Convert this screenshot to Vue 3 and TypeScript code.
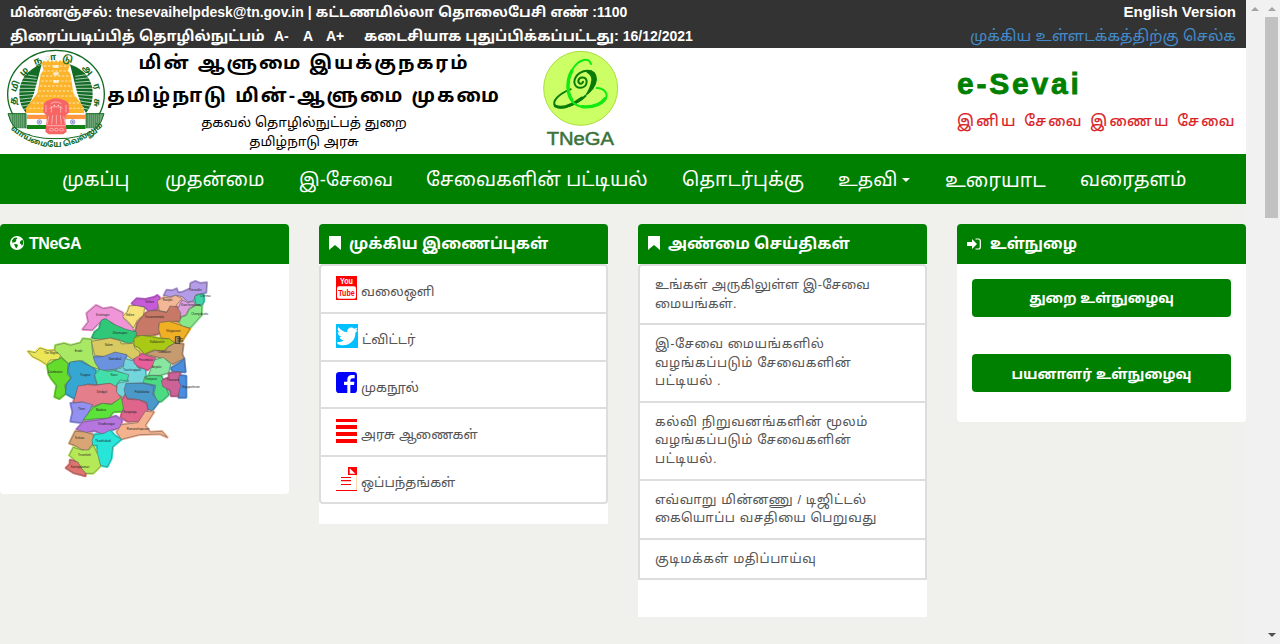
<script setup lang="ts">
interface Region { fill: string; points: string }
interface Label { x: number; y: number; text: string }

const menu = [
  { label: 'முகப்பு', id: 'home' },
  { label: 'முதன்மை', id: 'main' },
  { label: 'இ-சேவை', id: 'sevai' },
  { label: 'சேவைகளின் பட்டியல்', id: 'services' },
  { label: 'தொடர்புக்கு', id: 'contact' },
  { label: 'உதவி', id: 'help', caret: true },
  { label: 'உரையாட', id: 'chat' },
  { label: 'வரைதளம்', id: 'map' },
]

const links = [
  { icon: 'youtube', label: 'வலைஒளி' },
  { icon: 'twitter', label: 'ட்விட்டர்' },
  { icon: 'facebook', label: 'முகநூல்' },
  { icon: 'orders', label: 'அரசு ஆணைகள்' },
  { icon: 'document', label: 'ஒப்பந்தங்கள்' },
]

const news: string[][] = [
  ['உங்கள் அருகிலுள்ள இ-சேவை', 'மையங்கள்.'],
  ['இ-சேவை மையங்களில்', 'வழங்கப்படும் சேவைகளின்', 'பட்டியல் .'],
  ['கல்வி நிறுவனங்களின் மூலம்', 'வழங்கப்படும் சேவைகளின்', 'பட்டியல்.'],
  ['எவ்வாறு மின்னணு / டிஜிட்டல்', 'கையொப்ப வசதியை பெறுவது'],
  ['குடிமக்கள் மதிப்பாய்வு'],
]

const seal = [
  { ch: 'த', x: 40, y: 167, r: -82 },
  { ch: 'மி', x: 46, y: 124, r: -66 },
  { ch: 'ழ', x: 72, y: 80, r: -45 },
  { ch: 'ந', x: 113, y: 48, r: -22 },
  { ch: 'ா', x: 152, y: 38, r: -4 },
  { ch: 'டு', x: 203, y: 42, r: 16 },
  { ch: 'அ', x: 263, y: 75, r: 48 },
  { ch: 'ர', x: 290, y: 125, r: 72 },
  { ch: 'சு', x: 290, y: 173, r: 92 },
]

const regions: Region[] = [
  { fill: '#f096d8', points: '188,178 205,156 200,130 228,106 250,116 275,112 308,128 312,146 336,170 344,186 326,184 300,176 276,158 252,146 236,160 216,180' },
  { fill: '#f7e27c', points: '308,140 322,126 328,108 350,106 374,112 370,136 352,150 340,174 326,156' },
  { fill: '#c65ad8', points: '336,100 350,86 376,88 402,82 412,76 420,84 416,100 414,116 388,124 374,110 344,106' },
  { fill: '#b59ce8', points: '432,76 440,60 456,62 470,56 474,68 488,66 510,56 512,40 526,34 540,40 560,38 558,68 528,74 520,92 504,96 488,80 468,76 450,80' },
  { fill: '#f3b795', points: '412,92 432,82 450,84 466,76 486,86 470,104 466,110 446,118 440,126 418,122' },
  { fill: '#dea0dc', points: '486,90 504,98 522,94 526,108 508,114 496,136 480,140 470,122 478,108' },
  { fill: '#40d4a8', points: '524,78 550,70 552,92 546,106 528,104' },
  { fill: '#88e888', points: '508,118 528,106 546,108 544,136 528,154 510,174 486,168 474,154 488,140 500,136' },
  { fill: '#c87866', points: '374,132 390,122 416,122 440,128 450,108 470,110 482,128 480,154 446,154 416,162 420,190 394,196 366,198 344,196 352,160' },
  { fill: '#2fc878', points: '216,204 224,186 238,176 244,150 258,146 280,162 318,178 350,186 346,214 326,220 300,210 274,204 240,208' },
  { fill: '#efb024', points: '418,158 446,154 488,168 510,176 492,204 486,214 472,202 464,218 444,206 424,204 416,178' },
  { fill: '#a9c914', points: '342,204 364,196 392,200 420,206 448,206 464,220 444,230 432,242 400,240 374,252 356,232 342,228' },
  { fill: '#d8c960', points: '214,214 250,208 270,204 300,212 304,222 340,220 344,234 360,246 358,264 338,268 318,254 284,248 256,260 224,256' },
  { fill: '#a8e864', points: '106,226 132,220 152,226 182,218 188,206 214,208 218,254 228,276 238,298 214,290 188,272 164,274 144,280 122,258 104,244' },
  { fill: '#ebe656', points: '24,244 46,248 60,234 84,242 102,240 122,256 116,268 90,270 80,284 62,272 38,260' },
  { fill: '#65dc2b', points: '82,286 104,272 124,264 144,280 142,314 152,324 134,346 138,370 118,386 104,380 110,346 94,326 86,312' },
  { fill: '#36a6d3', points: '150,276 180,272 188,278 214,290 228,302 224,324 232,344 202,342 174,354 164,386 136,370 140,342 154,324 144,302' },
  { fill: '#6b92df', points: '220,262 248,260 286,246 320,254 312,286 284,298 242,302 226,280' },
  { fill: '#72d5dc', points: '314,266 344,274 352,292 376,298 380,338 328,340 310,382 288,370 292,340 326,334 316,314 284,300 310,292' },
  { fill: '#e85e9b', points: '342,266 366,252 406,264 404,286 382,300 356,290 342,280' },
  { fill: '#c79b70', points: '376,252 404,242 434,244 446,230 464,220 490,222 486,252 492,266 458,282 436,268 408,260' },
  { fill: '#88e6a0', points: '404,270 430,262 452,282 446,308 420,316 386,316 394,294' },
  { fill: '#43dfaa', points: '224,314 240,298 264,304 284,302 326,314 322,332 300,330 286,350 270,340 232,344' },
  { fill: '#4bdc83', points: '374,320 398,316 424,318 436,348 446,374 424,394 410,394 402,370 408,346 370,338' },
  { fill: '#4a8ee2', points: '454,294 478,280 492,266 496,306 458,304' },
  { fill: '#4a8ee2', points: '476,316 498,318 498,382 476,382' },
  { fill: '#cb6298', points: '446,310 482,306 474,328 482,346 474,378 454,378 450,360 428,350 424,332 448,322' },
  { fill: '#e37e8a', points: '174,348 202,344 226,346 270,340 290,350 290,366 304,384 274,402 246,400 218,410 186,396 160,398' },
  { fill: '#4a99ca', points: '318,340 370,340 402,348 398,372 416,396 396,422 384,418 380,396 354,388 320,384 312,360' },
  { fill: '#9290f0', points: '152,400 188,396 218,404 202,434 184,458 152,454 158,426' },
  { fill: '#5be33a', points: '222,412 248,400 274,404 302,384 314,402 308,424 280,426 266,444 228,446 190,450 208,426' },
  { fill: '#df658c', points: '306,390 318,376 322,388 358,390 380,402 384,422 360,454 326,456 302,442 310,416' },
  { fill: '#b776df', points: '190,456 236,450 268,444 288,438 306,452 300,474 274,480 254,496 224,482 196,488 170,478' },
  { fill: '#f5b28f', points: '304,464 354,458 376,424 402,426 376,466 390,486 426,484 442,502 420,492 358,494 304,508 290,486' },
  { fill: '#daa574', points: '166,484 194,486 220,494 218,522 202,542 184,538 164,526 148,520' },
  { fill: '#27e5d8', points: '216,510 224,494 252,490 270,480 284,496 304,508 278,530 274,566 262,590 240,586 230,556 232,526 218,526' },
  { fill: '#b5e957', points: '160,532 184,540 206,540 220,526 234,556 242,588 220,610 190,610 184,594 164,570 148,556' },
  { fill: '#df746f', points: '138,594 150,582 150,570 174,576 184,594 196,608 196,618 160,608' },
]

const districts: Label[] = [
  { x: 228, y: 138, text: 'Krishnagiri' }, { x: 317, y: 139, text: 'Vellore' },
  { x: 376, y: 100, text: 'Vellore' }, { x: 428, y: 94, text: 'Ranipet' },
  { x: 506, y: 63, text: 'Thiruvallur' }, { x: 540, y: 82, text: 'Chennai' },
  { x: 484, y: 108, text: 'Kancheepuram' }, { x: 514, y: 135, text: 'Chengalpattu' },
  { x: 374, y: 144, text: 'Tiruvannamalai' }, { x: 278, y: 193, text: 'Dharmapuri' },
  { x: 438, y: 186, text: 'Viluppuram' }, { x: 390, y: 218, text: 'Kallakurichi' },
  { x: 254, y: 228, text: 'Salem' }, { x: 164, y: 246, text: 'Erode' },
  { x: 72, y: 253, text: 'The Nilgiris' }, { x: 266, y: 269, text: 'Namakkal' },
  { x: 414, y: 248, text: 'Cuddalore' }, { x: 356, y: 274, text: 'Perambalur' },
  { x: 84, y: 310, text: 'Coimbatore' }, { x: 180, y: 319, text: 'Tiruppur' },
  { x: 272, y: 319, text: 'Karur' }, { x: 310, y: 304, text: 'Tiruchirappalli' },
  { x: 396, y: 295, text: 'Ariyalur' }, { x: 374, y: 331, text: 'Thanjavur' },
  { x: 440, y: 334, text: 'Thiruvarur' }, { x: 486, y: 355, text: 'Nagapattinam' },
  { x: 230, y: 369, text: 'Dindigul' }, { x: 344, y: 370, text: 'Pudukkottai' },
  { x: 174, y: 420, text: 'Theni' }, { x: 228, y: 424, text: 'Madurai' },
  { x: 310, y: 429, text: 'Sivaganga' }, { x: 234, y: 465, text: 'Virudhunagar' },
  { x: 320, y: 479, text: 'Ramanathapuram' }, { x: 164, y: 507, text: 'Tenkasi' },
  { x: 226, y: 515, text: 'Thoothukudi' }, { x: 174, y: 557, text: 'Tirunelveli' },
  { x: 152, y: 595, text: 'Kanniyakumari' },
]
</script>

<template>
  <div class="window">
    <div class="page">
      <div class="topbar">
        <div class="row">
          <span class="t-mail"><span class="tight">மின்னஞ்சல்:</span> tnesevaihelpdesk@tn.gov.in | <span class="loose">கட்டணமில்லா தொலைபேசி எண்</span> :1100</span>
          <a class="version">English Version</a>
        </div>
        <div class="row">
          <div class="tools">
            <span class="t-reader">திரைப்படிப்பித் தொழில்நுட்பம்</span>
            <a class="sz sz1">A-</a><a class="sz sz2">A</a><a class="sz sz3">A+</a>
            <span class="t-updated"><span>கடைசியாக புதுப்பிக்கப்பட்டது:</span> 16/12/2021</span>
          </div>
          <a class="skip">முக்கிய உள்ளடக்கத்திற்கு செல்க</a>
        </div>
      </div>

      <header class="brand">
        <svg class="emblem" viewBox="0 9 330 318">
          <defs>
            <path id="arcBottom" d="M26 248 Q165 368 310 242" />
          </defs>
          <ellipse cx="168" cy="148" rx="145" ry="132" fill="#fff" stroke="#126b25" stroke-width="4" />
          <path d="M125 58Q56 84 58 150Q58 180 78 204L88 180L102 145Z" fill="#126b25" />
          <path d="M210 58Q280 84 278 150Q278 180 258 204L244 180L232 145Z" fill="#126b25" />
          <g stroke="#fff" stroke-width="2">
            <path v-for="n in 11" :key="n" :d="`M56 ${75 + n * 11}L110 ${85 + n * 9}M280 ${75 + n * 11}L226 ${85 + n * 9}`" />
          </g>
          <path d="M126 54L132 46L138 52L144 45L150 52L156 45L162 52L168 45L174 52L180 45L186 52L192 45L198 52L206 46L210 60L204 76L212 88L220 145L252 188V204H78V188L112 145L122 88L130 76Z" fill="#fcb52b" />
          <g stroke="#fff" stroke-width="2.4" stroke-dasharray="7 5" fill="none" opacity=".85">
            <path d="M132 63H206M130 78H208M126 93H212M124 108H214M120 123H216M116 138H220M112 153H228M98 174H240M88 190H250" />
          </g>
          <path d="M160 60h16v9h-16zM160 82h16v9h-16zM160 105h16v9h-16z" fill="#fff" opacity=".75" />
          <path d="M24 206H78V250H46Q30 232 24 206M258 206H312Q306 232 290 250H258Z" fill="#75a97d" stroke="#126b25" stroke-width="3" />
          <g stroke="#126b25" stroke-width="1.5"><path v-for="n in 7" :key="n" :d="`M${32 + n * 6} 206V248M${256 + n * 6} 206V248`" /></g>
          <path d="M46 250Q94 283 168 281Q242 283 290 250" fill="#fff" stroke="#126b25" stroke-width="3" />
          <path d="M81 209H256V223H81Z" fill="#ff9640" /><path d="M81 223H256V240H81Z" fill="#fff" /><path d="M81 240H256V252H81Z" fill="#138313" />
          <g fill="#c7cbed" stroke="#5960b0" stroke-width="1.5"><circle cx="118" cy="231" r="7" /><circle cx="218" cy="231" r="7" /></g>
          <g fill="#5960b0"><circle cx="118" cy="231" r="2" /><circle cx="218" cy="231" r="2" /></g>
          <path d="M146 166Q168 154 192 166Q208 170 206 184L208 202L196 212V228L200 260L190 268H146L136 260L140 228V212L130 202L131 182Q132 170 146 166Z" fill="#f66464" />
          <path d="M152 176Q168 166 184 176M148 190Q168 180 188 190M154 182V203M182 182V203M138 180V202M198 180V202M146 214L142 238M158 210L155 238M169 210V238M181 210L184 238M191 214L196 238M140 242H198M148 254a6 4 0 1 0 12 0a6 4 0 1 0-12 0M163 254a6 4 0 1 0 12 0a6 4 0 1 0-12 0M179 254a6 4 0 1 0 12 0a6 4 0 1 0-12 0" fill="none" stroke="#ffd0d0" stroke-width="2" />
          <g fill="#fff"><circle cx="163" cy="181" r="2" /><circle cx="175" cy="181" r="2" /></g>
          <text v-for="s in seal" :key="s.ch" class="seal-text" :transform="`translate(${s.x} ${s.y}) rotate(${s.r})`" y="8">{{ s.ch }}</text>
          <text class="seal-motto"><textPath href="#arcBottom" startOffset="8">வாய்மையே வெல்லும்</textPath></text>
        </svg>
        <div class="titles">
          <h1 class="h-a">மின் ஆளுமை இயக்குநகரம்</h1>
          <h1 class="h-b">தமிழ்நாடு மின்-ஆளுமை முகமை</h1>
          <p class="h-c">தகவல் தொழில்நுட்பத் துறை</p>
          <p class="h-d">தமிழ்நாடு அரசு</p>
        </div>
        <svg class="logo" viewBox="660 144 240 318">
          <circle cx="782" cy="265" r="111" fill="#ccff66" stroke="#acdd3e" stroke-width="3" />
          <g fill="none" stroke-linecap="round">
            <path d="M752 268C716 280 694 306 706 318C722 332 772 312 796 288" stroke="#087b08" stroke-width="6" />
            <path d="M706 318Q734 332 786 294" stroke="#087b08" stroke-width="9" />
            <path d="M813 192C808 170 778 178 760 204C738 238 738 288 760 308C785 330 836 322 856 298C868 280 850 264 830 264" stroke="#10ea10" stroke-width="6" />
            <path d="M756 212C740 240 740 280 756 300M786 320Q834 324 855 296" stroke="#10ea10" stroke-width="10" />
            <path d="M814 214C790 206 764 224 763 246C764 270 799 268 800 246C800 229 778 229 775 242C774 253 788 254 789 245" stroke="#087b08" stroke-width="6" />
          </g>
          <path d="M800 210Q830 208 831 238Q829 268 792 292Q812 262 814 240Q814 224 800 218Z" fill="#087b08" />
          <text x="680" y="436" textLength="202" lengthAdjust="spacingAndGlyphs" class="logo-text">TNeGA</text>
        </svg>
        <div class="sevai"><strong>e-Sevai</strong><span>இனிய சேவை இணைய சேவை</span></div>
      </header>

      <nav class="nav">
        <a v-for="m in menu" :key="m.id" :class="'n-' + m.id"><span>{{ m.label }}</span><i v-if="m.caret" class="caret"></i></a>
      </nav>

      <main class="grid">
        <section class="panel">
          <h2 class="latin"><svg class="i-globe" viewBox="0 0 16 16"><circle cx="8" cy="8" r="7" fill="#fff" /><path d="M3 5.5L5 3L7.4 2.4L8.6 3.5L6.8 4.8L7.4 6L5.8 7.3L4.5 7.2L3.6 8.4ZM5 9L8.2 9.2L9 10.6L7.4 13.4L6.4 12.2ZM11.4 6L13.6 4.8L14.4 8L13 11L12.1 9.2L10.8 8.2Z" fill="green" /></svg><span>TNeGA</span></h2>
          <div class="map-body">
            <svg class="map" viewBox="0 0 600 630">
              <g stroke-width="8" stroke-linejoin="round">
                <polygon v-for="(r, i) in regions" :key="i" :points="r.points" :fill="r.fill" :stroke="r.fill" />
              </g>
              <g stroke="#555" stroke-width="1.5" stroke-linejoin="round">
                <polygon v-for="(r, i) in regions" :key="i" :points="r.points" :fill="r.fill" />
              </g>
              <path d="M466 200H480V220H466ZM472 206H488M472 213H490M478 200V218" fill="#ac9156" stroke="#333" stroke-width="2.5" />
              <text v-for="(d, i) in districts" :key="i" :x="d.x" :y="d.y">{{ d.text }}</text>
            </svg>
          </div>
        </section>

        <section class="panel">
          <h2><svg class="i-mark" viewBox="0 0 12 14"><path d="M0 0H12V14L6 9L0 14Z" fill="#fff" /></svg><span class="p-links">முக்கிய இணைப்புகள்</span></h2>
          <ul class="list links">
            <li v-for="l in links" :key="l.icon">
              <svg v-if="l.icon === 'youtube'" viewBox="0 0 63 72"><path d="M0 0H63V72H0Z" fill="red" /><rect x="3" y="31" width="57" height="37" rx="6" fill="#fff" /><text x="12" y="24" textLength="39" lengthAdjust="spacingAndGlyphs" class="yt">You</text><text x="7" y="59" textLength="49" lengthAdjust="spacingAndGlyphs" class="yt red">Tube</text></svg>
              <svg v-else-if="l.icon === 'twitter'" class="wide" viewBox="0 0 66 72"><path d="M0 0H66V72H0Z" fill="#00bfff" /><path d="M4 50C13 51 19 49 23 45C16 44 12 40 11 35H17C9 32 5 26 5 20L11 22C4 16 4 9 7 5C15 15 23 20 34 21C32 8 46 2 55 10L64 7C63 11 61 14 58 16L65 14C64 18 61 20 58 22C60 51 27 69 4 55Z" transform="translate(0 4)" fill="#fff" /></svg>
              <svg v-else-if="l.icon === 'facebook'" viewBox="0 0 63 72"><rect width="63" height="63" rx="10" fill="#00f" /><path d="M34 63V39H24V29H34V23Q34 9 48 9H56V19H50Q43 19 43 25V29H55L54 39H43V63Z" fill="#fff" /></svg>
              <svg v-else-if="l.icon === 'orders'" viewBox="0 0 63 72"><path d="M0 0H63V9H0ZM0 18H63V30H0ZM0 39H63V51H0ZM0 60H63V72H0Z" fill="red" /></svg>
              <svg v-else viewBox="0 0 63 72"><path d="M36 0H63V24H36ZM15 30H45V33H15ZM15 39H45V43H15ZM15 51H45V54H15ZM0 69H63V72H0Z" fill="red" /><path d="M41 4V20H58Z" fill="#fff" /><path d="M61 24H63V69H61Z" fill="#ffc080" /></svg>
              <span>{{ l.label }}</span>
            </li>
          </ul>
        </section>

        <section class="panel">
          <h2><svg class="i-mark" viewBox="0 0 12 14"><path d="M0 0H12V14L6 9L0 14Z" fill="#fff" /></svg><span class="p-news">அண்மை செய்திகள்</span></h2>
          <ul class="list news">
            <li v-for="(n, i) in news" :key="i" :class="{ first: i === 0 }"><span v-for="line in n" :key="line">{{ line }}</span></li>
          </ul>
        </section>

        <section class="panel">
          <h2><svg class="i-login" viewBox="0 0 14 12"><path d="M0 4H5V1L10 6L5 11V8H0Z" fill="#fff" /><path d="M8.5 1H11.5Q13.3 1 13.3 3V9Q13.3 11 11.5 11H8.5" fill="none" stroke="#fff" stroke-width="1.2" /></svg><span class="p-login">உள்நுழை</span></h2>
          <div class="login">
            <button class="b-dept"><span>துறை உள்நுழைவு</span></button>
            <button class="b-user"><span>பயனாளர் உள்நுழைவு</span></button>
          </div>
        </section>
      </main>
    </div>
    <div class="scroll inner"><i class="up"></i></div>
    <div class="scroll outer"><i class="up"></i><b></b><i class="down"></i></div>
  </div>
</template>

<style>
html, body { margin: 0; overflow: hidden; }
</style>

<style scoped>
* { box-sizing: border-box; }
.window { display: flex; width: 1280px; height: 644px; background: #f0f0ec; font: 14px/20px "Liberation Sans", "Noto Sans Tamil", "Noto Sans", sans-serif; color: #000; overflow: hidden; }
.page { width: 1246px; flex: none; }
span, a, h1, p { white-space: nowrap; }
.topbar { height: 48px; background: #333; color: #fff; font-weight: bold; padding: 0 10px; }
.row { height: 24px; line-height: 24px; display: flex; justify-content: space-between; }
.tools { display: flex; }
.tight { font-size: 13.6px; }
.loose { letter-spacing: .15px; }
.t-reader { width: 254px; font-size: 14.5px; }
.sz1 { width: 29px; margin-left: 10px; }
.sz2 { width: 23px; }
.sz3 { width: 38px; }
.t-updated > span { font-size: 14.6px; }
.version { font-size: 15px; }
.skip { color: #428bca; font-weight: normal; font-size: 15.3px; }
.brand { height: 106px; background: #fff; display: flex; }
.emblem { width: 110px; height: 106px; flex: none; margin-right: -3px; }
.seal-text { font-size: 27px; font-weight: bold; fill: #126b25; text-anchor: middle; }
.seal-motto { font-size: 24px; font-weight: bold; fill: #126b25; }
.titles { width: 394px; display: flex; flex-direction: column; align-items: center; }
.titles > * { margin: 0; }
h1 { font-size: 18.5px; letter-spacing: 2px; font-weight: bold; height: 32px; line-height: 29px; }
.h-b { font-size: 19.05px; line-height: 32px; }
p { font-size: 13.5px; height: 19px; line-height: 21px; }
.logo { width: 80px; height: 106px; margin-left: 39px; flex: none; }
.logo-text { font-size: 54px; fill: #3b733b; stroke: #3b733b; stroke-width: 1.5; }
.sevai { margin-left: 337px; padding-top: 18px; width: 280px; }
.sevai strong { display: block; font-size: 30px; line-height: 36px; letter-spacing: 2.8px; color: green; -webkit-text-stroke: .8px green; }
.sevai span { display: block; font-size: 15px; line-height: 24px; margin-top: 7px; letter-spacing: 2.35px; color: #d9201f; -webkit-text-stroke: .2px #d9201f; }
.nav { height: 50px; background: green; color: #fff; display: flex; padding: 1px 0 0 62px; font-size: 19.2px; line-height: 50px; }
.nav a { flex: none; display: flex; align-items: center; }
.n-home { width: 103px; }
.n-main { width: 134px; }
.n-sevai { width: 127px; font-size: 18.4px; }
.n-services { width: 256px; }
.n-contact { width: 156px; }
.n-help { width: 107px; font-size: 18.6px; }
.n-chat { width: 135px; font-size: 19.5px; }
.caret { border: 4px solid transparent; border-top-color: #fff; border-bottom: 0; margin: 1px 0 0 5px; }
.grid { display: grid; grid-template-columns: repeat(4, 289px); gap: 30px; padding-top: 20px; align-items: start; }
.panel { background: #fff; border-radius: 4px; }
h2 { margin: 0; height: 40px; background: green; color: #fff; font-size: 15.6px; line-height: 38px; display: flex; align-items: center; padding: 0 10px; border-radius: 4px 4px 0 0; }
.latin { font-size: 16px; letter-spacing: -.4px; }
.i-globe { width: 16px; height: 16px; margin: -2px 4px 0 -1px; }
.i-mark { width: 12px; height: 14px; margin: -2px 8px 0 0; }
.i-login { width: 14px; height: 12px; margin: -1px 9px 0 0; }
.p-login { font-size: 15.3px; }
.map-body { height: 230px; padding: 6px 0 0 20px; }
.map { display: block; width: 200px; height: 210px; }
.map text { font-size: 8.5px; fill: #222; }
.list { list-style: none; margin: 0; padding: 0; border: 2px solid #ddd; border-radius: 4px; color: #555; background: #fff; }
.list li { border-bottom: 2px solid #ddd; }
.list li:last-child { border-bottom: 0; }
.links { margin-bottom: 20px; height: 240px; font-size: 13.3px; }
.links li { height: 47.75px; display: flex; padding: 10px 15px 0; }
.links svg { width: 21px; height: 24px; flex: none; margin-right: 4px; overflow: visible; }
.links svg.wide { width: 22px; margin-right: 4px; }
.links span { line-height: 31px; }
.yt { font-size: 25px; font-weight: bold; fill: #fff; }
.yt.red { fill: red; }
.panel:has(.links), .panel:has(.news) { display: flow-root; border-radius: 4px 4px 0 0; }
.news { margin-bottom: 37px; border-radius: 4px 4px 0 0; font-size: 13px; line-height: 18.57px; letter-spacing: .55px; }
.news li { padding: 10px 15px; }
.news .first { letter-spacing: .2px; }
.news span { display: block; height: 18.57px; }
.login { padding: 15px 15px 30px; display: grid; gap: 37px; }
button { height: 38px; border: 0; border-radius: 4px; background: green; color: #fff; font: bold 14px/20px "Liberation Sans", "Noto Sans Tamil", sans-serif; padding-top: 2px; }
.b-dept { font-size: 13.7px; }
.scroll { width: 17px; flex: none; background: #f1f1f1; display: flex; flex-direction: column; align-items: center; height: 644px; }
.up { border: 4px solid transparent; border-top: 0; border-bottom: 4px solid #a3a3a3; margin-top: 7px; }
.scroll b { width: 13px; height: 201px; background: #c1c1c1; margin-top: 6px; }
.down { border: 4px solid transparent; border-bottom: 0; border-top: 4px solid #505050; margin: auto 0 7px; }
</style>
